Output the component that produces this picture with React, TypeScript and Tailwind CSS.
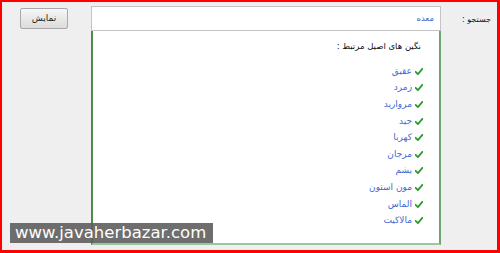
import React from "react";

const items = ["عقیق", "زمرد", "مروارید", "جید", "کهربا", "مرجان", "یشم", "مون استون", "الماس", "مالاکیت"];

function Check() {
  return (
    <svg width="8" height="7" viewBox="0 0 8 7" className="shrink-0">
      <path d="M0.6 3.8 L2.9 6.2 L7.4 0.8" stroke="#2e9a2e" strokeWidth="1.8" fill="none" strokeLinecap="round" strokeLinejoin="round" />
    </svg>
  );
}

export default function App() {
  return (
    <div className="relative w-[500px] h-[253px] bg-[#efefef] border-t-2 border-l-2 border-r-[3px] border-b-[3px] border-[#ff0000] flex items-start" style={{ fontFamily: '"DejaVu Sans", sans-serif' }}>
      <div className="ml-[18px] mt-[6px] w-[48px] h-[21px] rounded-[2px] border border-[#a9a9a9] bg-gradient-to-b from-[#f6f6f6] to-[#dcdcdc] flex items-center justify-center text-[9px] text-[#222]" dir="rtl">
        نمایش
      </div>
      <div className="ml-[23px] mt-[4px] w-[350px] flex flex-col">
        <div className="h-[25px] bg-white border border-[#c4c4c4] flex items-center justify-start pr-[6px] text-[8.5px] text-[#3b67d1]" dir="rtl">
          <span>معده</span>
        </div>
        <div className="h-[214px] bg-white border-l-2 border-l-[#4f8a4f] border-r-2 border-r-[#6fa36f] border-b-2 border-b-[#9cc79c] pt-[8px] pr-[16px]" dir="rtl">
          <div className="h-[14px] flex items-center pr-[2px] text-[8.5px] text-[#111] whitespace-nowrap">نگین های اصیل مرتبط :</div>
          <div className="mt-[10px] flex flex-col">
            {items.map((t) => (
              <div key={t} className="h-[16.6px] flex items-center gap-[3px]">
                <Check />
                <span className="text-[9px] text-[#4269d4] leading-none whitespace-nowrap">{t}</span>
              </div>
            ))}
          </div>
        </div>
      </div>
      <div className="ml-[21px] mt-[12px] text-[8px] text-[#111] whitespace-nowrap" dir="rtl">جستجو :</div>
      <div className="absolute left-[8px] top-[221px] w-[203px] h-[20px] bg-[#5e5e5e]/90 flex items-center pl-[5px] text-[16.5px] text-white leading-none">
        www.javaherbazar.com
      </div>
    </div>
  );
}
